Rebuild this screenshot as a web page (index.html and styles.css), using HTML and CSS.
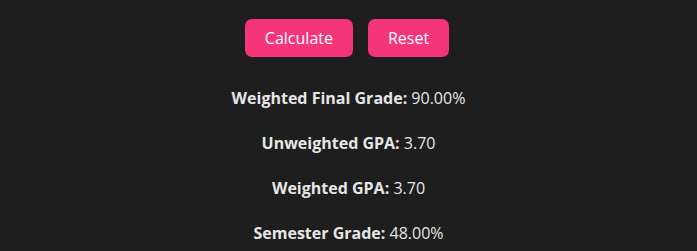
FILE: index.html
```html
<!DOCTYPE html>
<html>
<head>
<meta charset="utf-8">
<link rel="stylesheet" href="styles.css">
</head>
<body>
<div class="page">
  <div class="actions">
    <button class="btn">Calculate</button>
    <button class="btn">Reset</button>
  </div>
  <div class="results">
    <p class="result"><strong>Weighted Final Grade:</strong> 90.00%</p>
    <p class="result"><strong>Unweighted GPA:</strong> 3.70</p>
    <p class="result"><strong>Weighted GPA:</strong> 3.70</p>
    <p class="result"><strong>Semester Grade:</strong> 48.00%</p>
  </div>
</div>
</body>
</html>
```
FILE: styles.css
```css
html, body {
  margin: 0;
  padding: 0;
  background: #1e1e1e;
}
body {
  font-family: "Open Sans", "Noto Sans", sans-serif;
  color: #e6e6e6;
}
.page {
  display: flex;
  flex-direction: column;
  align-items: center;
  padding-top: 19px;
}
.actions {
  display: flex;
  gap: 15px;
  margin-left: -3px;
}
.btn {
  font-family: inherit;
  font-size: 16px;
  line-height: 18px;
  color: #ffffff;
  background: #f5357a;
  border: none;
  border-radius: 7px;
  padding: 10px 20px;
}
.results {
  display: flex;
  flex-direction: column;
  align-items: center;
  margin-top: 31px;
  gap: 24px;
}
.result {
  margin: 0;
  font-size: 16px;
  line-height: 21px;
}
.result strong {
  font-weight: 700;
}
```
